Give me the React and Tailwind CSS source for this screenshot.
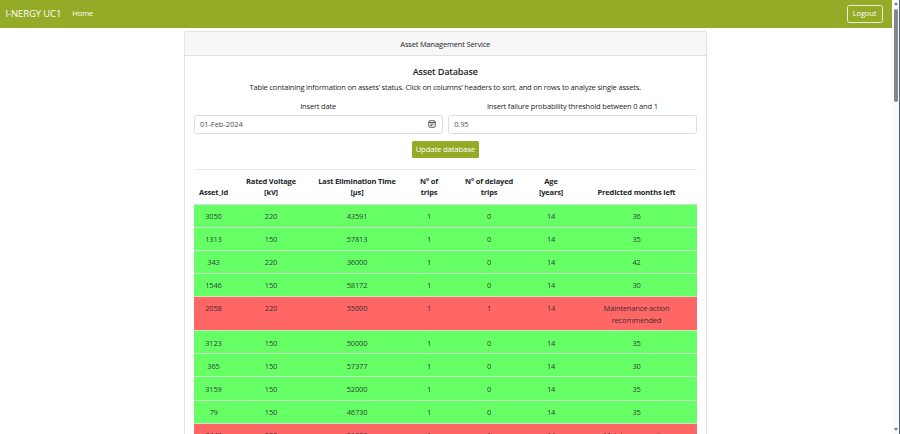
import React from "react";

const COLUMNS = [
  ["Asset_id"],
  ["Rated Voltage", "[kV]"],
  ["Last Elimination Time", "[µs]"],
  ["N° of", "trips"],
  ["N° of delayed", "trips"],
  ["Age", "[years]"],
  ["Predicted months left"],
];

const ALERT = "Maintenance action recommended";

const ROWS = [
  [3050, 220, 43591, 1, 0, 14, 36],
  [1313, 150, 57813, 1, 0, 14, 35],
  [343, 220, 36000, 1, 0, 14, 42],
  [1546, 150, 58172, 1, 0, 14, 30],
  [2058, 220, 55000, 1, 1, 14, ALERT],
  [3123, 150, 50000, 1, 0, 14, 35],
  [365, 150, 57377, 1, 0, 14, 30],
  [3159, 150, 52000, 1, 0, 14, 35],
  [79, 150, 46730, 1, 0, 14, 35],
  [3443, 220, 51000, 1, 1, 14, ALERT],
];

const GRID = "grid grid-cols-[40px_75px_97px_47px_73px_51px_120px]";

function Navbar() {
  return (
    <nav className="flex h-[27.5px] items-center bg-[#93ab26] pr-[9.5px] pl-[5.5px] text-white">
      <span className="text-[9.5px] tracking-[-0.12px] whitespace-nowrap">I-NERGY UC1</span>
      <a className="ml-[11px] text-[7.6px] tracking-[-0.1px]">Home</a>
      <button className="ml-auto h-[18.5px] w-[36px] rounded-[2.5px] border border-white/80 text-[7.6px] leading-none tracking-[-0.15px]">
        Logout
      </button>
    </nav>
  );
}

function CalendarIcon() {
  return (
    <svg viewBox="0 0 16 16" className="h-[8px] w-[8px]" fill="none" stroke="#333" strokeWidth="1.6">
      <rect x="1.5" y="1.5" width="13" height="13" rx="2.5" />
      <path d="M1.5 5h13M4.5 8.2h7M4.5 11.2h4" />
    </svg>
  );
}

function Field({ label, value, icon, valueClass = "" }) {
  return (
    <label className="flex flex-1 flex-col">
      <span className="h-[14.5px] text-center leading-[11.5px]">{label}</span>
      <span className="flex h-[18.5px] items-center justify-between rounded-[2.5px] border border-[#dcdfe2] pr-[6px] pl-[5.5px] text-[#495057]">
        <span className={valueClass}>{value}</span>
        {icon}
      </span>
    </label>
  );
}

function AssetTable() {
  return (
    <div className="mt-[10.5px] text-center leading-[11.5px]">
      <div className={`${GRID} h-[35px] items-end border-t border-[#e9ecef] pb-[5px] font-bold text-[#212529]`}>
        {COLUMNS.map((lines) => (
          <div key={lines.join()} className="whitespace-nowrap">
            {lines.map((line) => (
              <div key={line}>{line}</div>
            ))}
          </div>
        ))}
      </div>
      {ROWS.map((row) => {
        const alert = row[6] === ALERT;
        return (
          <div
            key={row[0]}
            className={`${GRID} border-t border-[#c3e6c5] pt-[6.4px] text-[#212529]/90 ${
              alert ? "h-[34.6px] bg-[#ff6666]" : "h-[23.07px] bg-[#66ff66]"
            }`}
          >
            {row.map((cell, i) => (
              <div key={i} className={i === 6 ? "px-[20px]" : ""}>
                {cell}
              </div>
            ))}
          </div>
        );
      })}
    </div>
  );
}

function Scrollbar() {
  return (
    <div className="flex w-[8px] flex-col items-center justify-between border-r border-[#4b6a80] bg-[#fafafa] pt-[2px] pb-[3px]">
      <div className="flex flex-col items-center gap-[4px]">
        <svg viewBox="0 0 4 3" className="h-[3px] w-[4px]" fill="#777">
          <path d="M0 3L2 0l2 3z" />
        </svg>
        <div className="h-[93px] w-[4px] rounded-full bg-[#868686]" />
      </div>
      <svg viewBox="0 0 4 3" className="h-[3px] w-[4px]" fill="#777">
        <path d="M0 0h4L2 3z" />
      </svg>
    </div>
  );
}

export default function App() {
  return (
    <div className="flex h-[434px] w-[900px] overflow-hidden bg-white font-['Open_Sans','Noto_Sans',sans-serif] text-[7.5px] tracking-[-0.17px] text-[#212529]">
      <div className="min-w-0 flex-1">
        <Navbar />
        <main className="mt-[3.5px] ml-[183.5px] w-[523.5px] rounded-[2px] border border-[#e3e3e3]">
          <header className="h-[23.5px] border-b border-[#dfdfdf] bg-[#f7f7f7] text-center leading-[24.4px]">
            Asset Management Service
          </header>
          <section className="px-[9px]">
            <h1 className="pt-[9px] text-center text-[9.1px] leading-[13px] font-semibold">Asset Database</h1>
            <p className="mt-[4px] text-center leading-[11.5px] whitespace-nowrap">
              Table containing information on assets’ status. Click on columns’ headers to sort, and on rows to analyze
              single assets.
            </p>
            <div className="mt-[7.5px] flex gap-[5px]">
              <Field
                label="Insert date"
                value="01-Feb-2024"
                icon={<CalendarIcon />}
                valueClass="tracking-[-0.05px]"
              />
              <Field label="Insert failure probability threshold between 0 and 1" value="0.95" />
            </div>
            <div className="mt-[7.5px] flex justify-center">
              <button className="h-[17px] w-[67.5px] rounded-[1.5px] bg-[#93ab26] text-[7.7px] leading-none tracking-[-0.14px] whitespace-nowrap text-white">
                Update database
              </button>
            </div>
            <AssetTable />
          </section>
        </main>
      </div>
      <Scrollbar />
    </div>
  );
}
